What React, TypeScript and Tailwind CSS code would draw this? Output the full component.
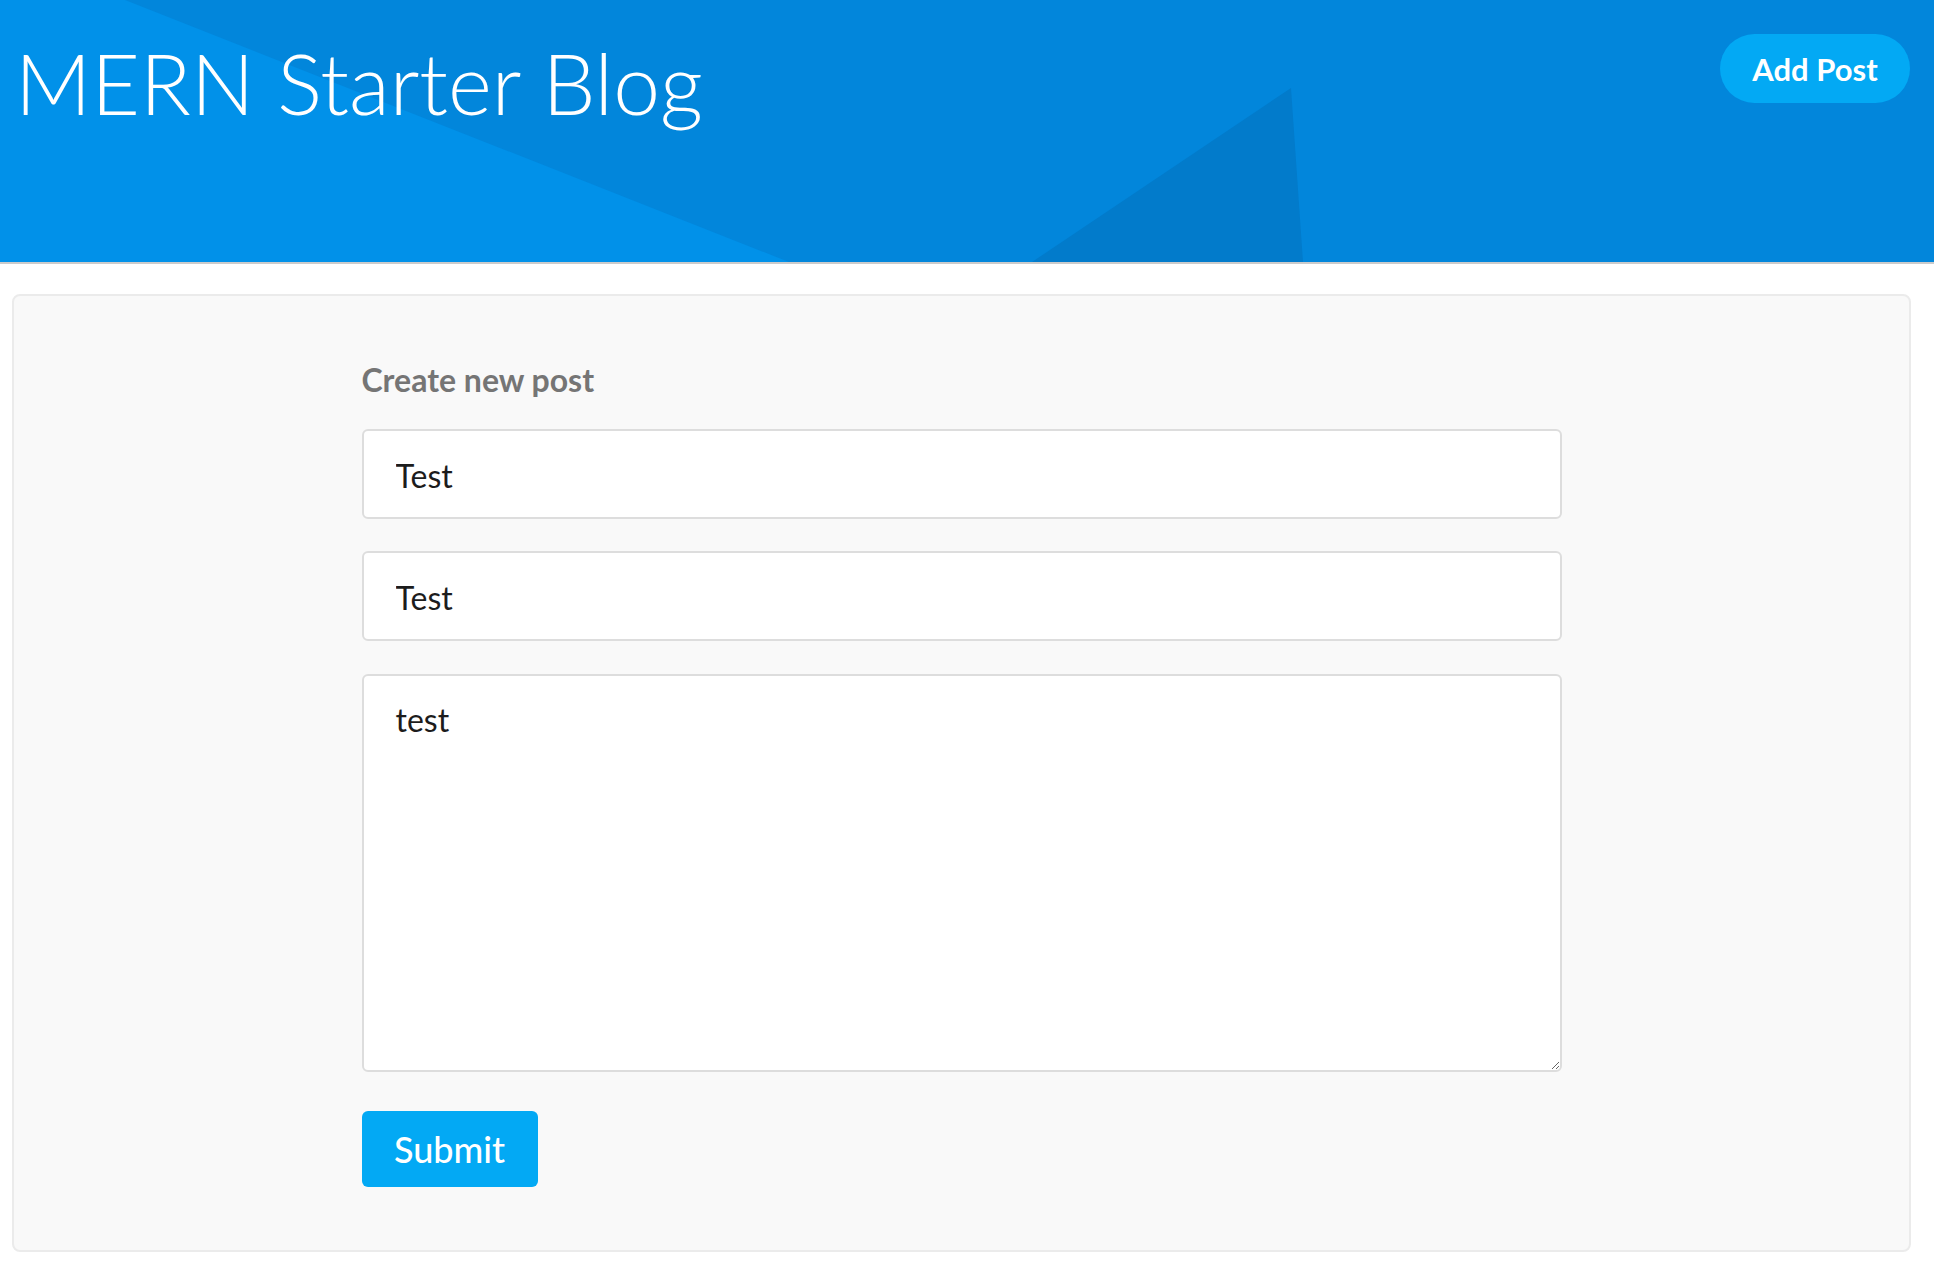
import React, { useState } from 'react';

const HeaderBackdrop: React.FC = () => (
    <svg
        className="absolute inset-0 w-full h-full"
        viewBox="0 0 1934 262"
        preserveAspectRatio="none"
        aria-hidden="true"
    >
        <rect x="0" y="0" width="1934" height="262" fill="#0286db" />
        <polygon points="0,0 125,0 789,262 0,262" fill="#0191e9" />
        <polygon points="1032,262 1291,88 1303,262" fill="#027bcb" />
    </svg>
);

export default function App() {
    const [title, setTitle] = useState('Test');
    const [slug, setSlug] = useState('Test');
    const [content, setContent] = useState('test');

    return (
        <div className="min-h-screen bg-white font-['Lato','Liberation_Sans',sans-serif]">
            {/* Header */}
            <header className="relative h-[264px] border-b-2 border-[#cbcbcb] overflow-hidden">
                <HeaderBackdrop />
                <div className="relative flex items-start justify-between">
                    <h1 className="pl-[15px] pt-[33px] text-[84px] leading-[1.2] font-light text-white">
                        MERN Starter Blog
                    </h1>
                    <button className="mt-[34px] mr-[24px] h-[69px] w-[190px] rounded-full bg-[#03a9f4] pt-[2px] text-[31px] font-bold text-white">
                        Add Post
                    </button>
                </div>
            </header>

            {/* Form */}
            <main className="pt-[30px] pl-[12px] pr-[23px]">
                <div className="h-[958px] rounded-lg border-2 border-[#ebebeb] bg-[#f9f9f9]">
                    <form className="mx-auto w-[1200px] pt-[65px] flex flex-col">
                        <h2 className="mb-[30px] text-[32px] leading-[38px] font-bold text-[#757575]">
                            Create new post
                        </h2>
                        <input
                            value={title}
                            onChange={(e) => setTitle(e.target.value)}
                            className="h-[90px] rounded-md border-2 border-[#dddddd] bg-white px-[32px] pt-[2px] text-[32px] text-[#1c1c1c] outline-none"
                        />
                        <input
                            value={slug}
                            onChange={(e) => setSlug(e.target.value)}
                            className="mt-[32px] h-[90px] rounded-md border-2 border-[#dddddd] bg-white px-[32px] pt-[2px] text-[32px] text-[#1c1c1c] outline-none"
                        />
                        <textarea
                            value={content}
                            onChange={(e) => setContent(e.target.value)}
                            className="mt-[33px] h-[398px] rounded-md border-2 border-[#dddddd] bg-white px-[32px] pt-[25px] text-[32px] leading-[1.2] text-[#1c1c1c] outline-none"
                        />
                        <div className="mt-[39px]">
                            <button
                                type="button"
                                className="h-[76px] w-[176px] rounded-md bg-[#03a9f4] text-[36px] font-medium text-white"
                            >
                                Submit
                            </button>
                        </div>
                    </form>
                </div>
            </main>
        </div>
    );
}
